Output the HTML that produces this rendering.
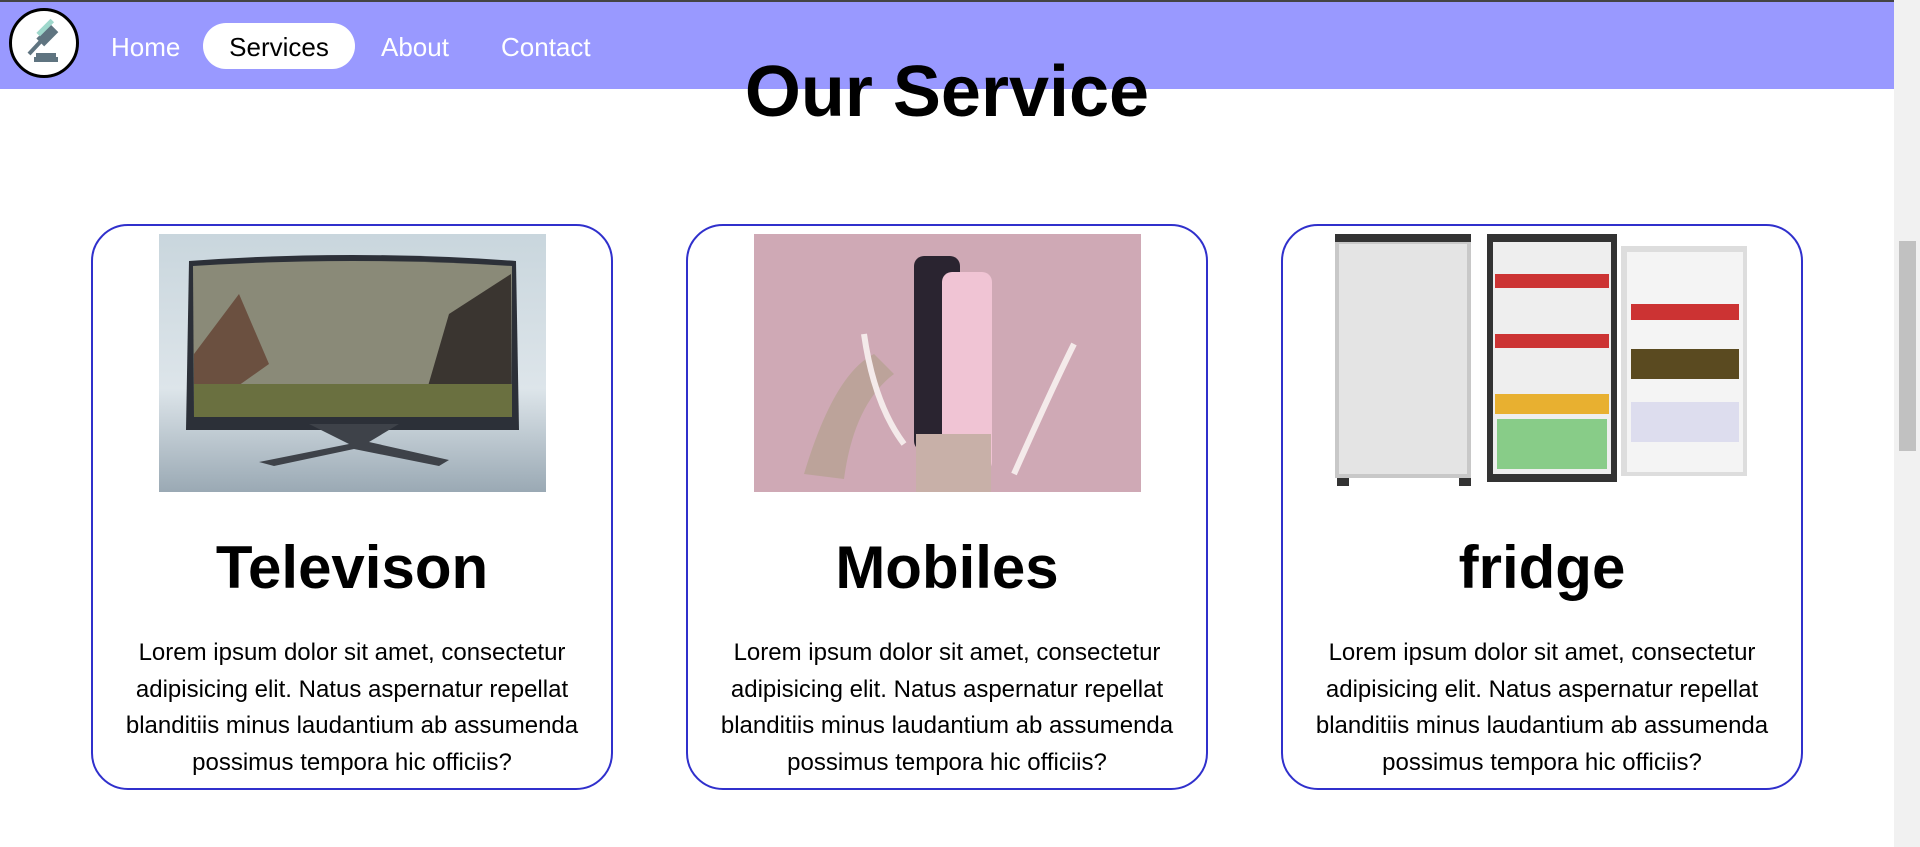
<!DOCTYPE html>
<html><head><meta charset="utf-8"><style>
*{margin:0;padding:0;box-sizing:border-box}
html,body{width:1920px;height:847px;overflow:hidden;background:#fff;font-family:"Liberation Sans",sans-serif}
.topline{position:absolute;left:0;top:0;width:1920px;height:2px;background:#444}
nav{position:absolute;left:0;top:2px;width:1894px;height:87px;background:#9999ff}
.logo{position:absolute;left:9px;top:6px;width:70px;height:70px;border:3px solid #000;border-radius:50%;background:#fff}
.nl{position:absolute;top:22px;font-size:26px;color:#fff;line-height:46px}
.pill{position:absolute;left:203px;top:21px;width:152px;height:46px;border-radius:23px;background:#fff;color:#000;text-align:center;font-size:26px;line-height:48px}
h1{position:absolute;left:0;width:1894px;top:52px;text-align:center;font-size:72px;font-weight:bold;color:#000;line-height:80px}
.sb{position:absolute;left:1894px;top:0;width:26px;height:847px;background:#f1f1f1}
.thumb{position:absolute;left:1899px;top:241px;width:17px;height:210px;background:#c1c1c1}
.card{position:absolute;top:224px;width:522px;height:566px;border:2.5px solid #3030cc;border-radius:37px}
.img{position:absolute;left:66px;top:8px;width:387px;height:258px;overflow:hidden}
.card h2{position:absolute;left:0;width:100%;top:302px;text-align:center;font-size:60px;font-weight:bold;line-height:80px}
.card p{position:absolute;left:0;width:100%;top:409px;text-align:center;font-size:24px;line-height:36.7px;color:#000}
</style></head><body>
<div class="topline"></div>
<nav>
<div class="logo"><svg width="64" height="64" viewBox="0 0 64 64"><rect x="30" y="14" width="11" height="20" fill="#5f7480" transform="rotate(45 35 24)"/><rect x="26" y="10" width="5" height="20" fill="#9fd8cc" transform="rotate(45 35 24)"/><line x1="30" y1="29" x2="17" y2="43" stroke="#5f7480" stroke-width="4"/><rect x="24" y="42" width="20" height="4" fill="#5f7480"/><rect x="22" y="46" width="24" height="5" fill="#5f7480"/></svg></div>
<span class="nl" style="left:111px">Home</span>
<div class="pill">Services</div>
<span class="nl" style="left:381px">About</span>
<span class="nl" style="left:501px">Contact</span>
</nav>
<h1>Our Service</h1>

<div class="card" style="left:91px"><div class="img" style="background:linear-gradient(180deg,#c9d6dd,#dde5ea 60%,#9aa9b4)">
<svg width="387" height="258"><path d="M30 27 Q193 15 357 27 L360 196 L27 196 Z" fill="#2c3038"/><path d="M34 32 Q193 22 353 32 L352 183 L35 183 Z" fill="#8a8a78"/><path d="M35 120 L80 60 L110 130 L35 183Z" fill="#6b5040"/><path d="M290 80 L352 40 L352 183 L260 183Z" fill="#3a3530"/><rect x="35" y="150" width="318" height="33" fill="#6a7040"/><path d="M150 190 L190 210 L100 228 L115 232 L195 215 L280 232 L290 226 L210 208 L240 190Z" fill="#3e4249"/></svg></div>
<h2>Televison</h2>
<p>Lorem ipsum dolor sit amet, consectetur<br>adipisicing elit. Natus aspernatur repellat<br>blanditiis minus laudantium ab assumenda<br>possimus tempora hic officiis?</p></div>

<div class="card" style="left:686px"><div class="img" style="background:#cfa9b5">
<svg width="387" height="258"><rect x="160" y="22" width="46" height="195" rx="10" fill="#2a2430"/><rect x="188" y="38" width="50" height="200" rx="10" fill="#f0c4d4"/><rect x="162" y="200" width="75" height="58" fill="#c8b0a8"/><path d="M50 240 Q80 140 120 120 L140 140 Q100 170 90 245Z" fill="#bca39a"/><path d="M260 240 Q300 150 320 110" stroke="#f4eaea" stroke-width="6" fill="none"/><path d="M110 100 Q120 170 150 210" stroke="#f4eaea" stroke-width="6" fill="none"/></svg></div>
<h2>Mobiles</h2>
<p>Lorem ipsum dolor sit amet, consectetur<br>adipisicing elit. Natus aspernatur repellat<br>blanditiis minus laudantium ab assumenda<br>possimus tempora hic officiis?</p></div>

<div class="card" style="left:1281px"><div class="img" style="left:52px;width:412px;background:#fff">
<svg width="412" height="258"><rect x="0" y="6" width="136" height="238" fill="#c8c8c8"/><rect x="4" y="10" width="128" height="230" fill="#e4e4e4"/><rect x="0" y="0" width="136" height="8" fill="#333"/><rect x="152" y="0" width="130" height="248" fill="#333"/><rect x="158" y="8" width="118" height="232" fill="#eee"/><rect x="160" y="40" width="114" height="14" fill="#c33"/><rect x="160" y="100" width="114" height="14" fill="#c33"/><rect x="160" y="160" width="114" height="20" fill="#e8b030"/><rect x="162" y="185" width="110" height="50" fill="#8c8"/><rect x="286" y="12" width="128" height="230" fill="#ddd"/><rect x="292" y="18" width="116" height="220" fill="#f4f4f4"/><rect x="296" y="70" width="108" height="16" fill="#c33"/><rect x="296" y="115" width="108" height="30" fill="#5a4a20"/><rect x="296" y="168" width="108" height="40" fill="#dde"/><rect x="2" y="244" width="12" height="8" fill="#333"/><rect x="124" y="244" width="12" height="8" fill="#333"/></svg></div>
<h2>fridge</h2>
<p>Lorem ipsum dolor sit amet, consectetur<br>adipisicing elit. Natus aspernatur repellat<br>blanditiis minus laudantium ab assumenda<br>possimus tempora hic officiis?</p></div>

<div class="sb"></div><div class="thumb"></div>
</body></html>
